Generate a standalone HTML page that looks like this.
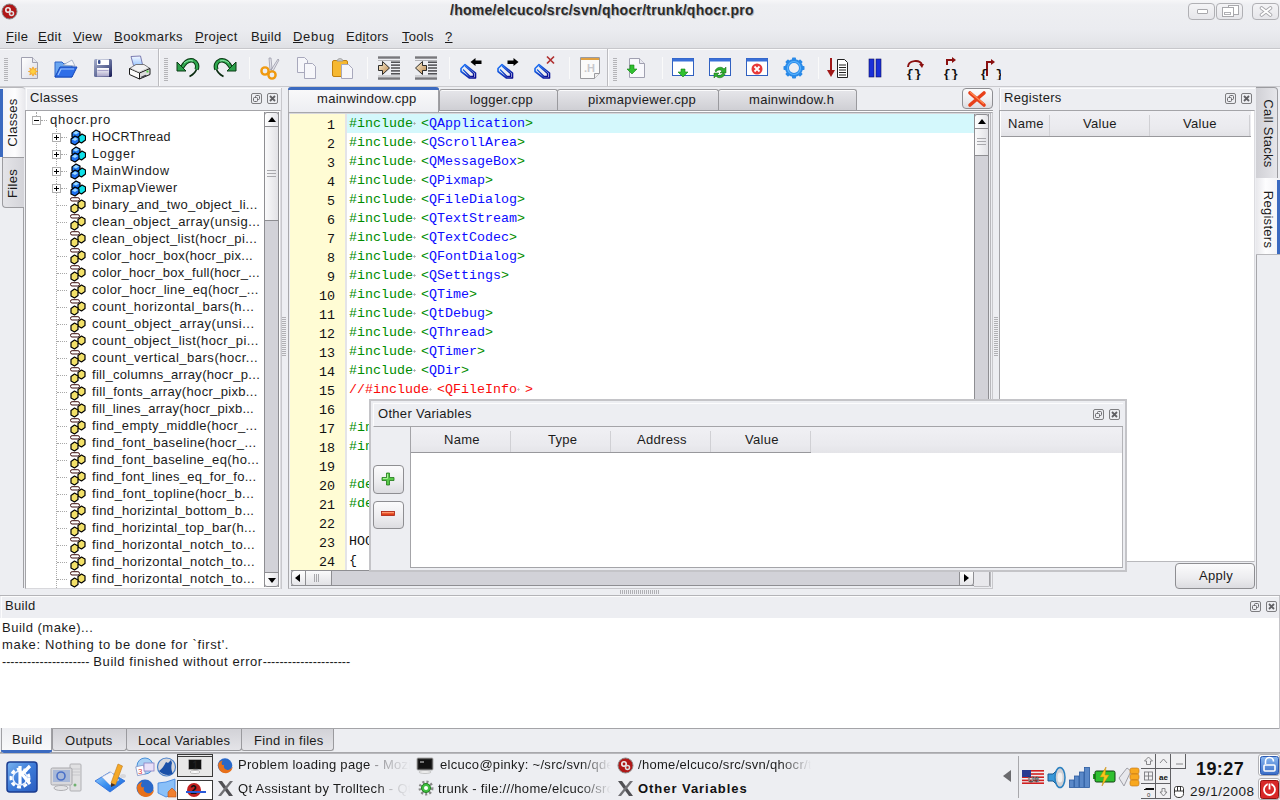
<!DOCTYPE html>
<html><head><meta charset="utf-8">
<style>
*{margin:0;padding:0;box-sizing:border-box}
html,body{width:1280px;height:800px;overflow:hidden}
body{position:relative;background:#edeef2;font-family:"Liberation Sans",sans-serif;color:#1b1b1b}
.a{position:absolute}
.t{position:absolute;font-size:13px;line-height:15px;white-space:nowrap;letter-spacing:0.3px}
.u{text-decoration:underline;text-underline-offset:1px}
.sp{background:radial-gradient(circle at 1.5px 7.5px,#a8a8a8 0.9px,transparent 1.3px)}
.sp.r{background:radial-gradient(circle at 1.5px 7.5px,#b8b8b8 0.9px,transparent 1.3px)}
.mono{font-family:"Liberation Mono",monospace;font-size:13.33px;line-height:19px;white-space:pre}
.btn{position:absolute;border:1px solid #8e8e92;border-radius:3px;background:linear-gradient(#fbfbfc,#ececef 60%,#dcdce0)}
.dk{position:absolute;width:11px;height:11px;border:1px solid #7d7d80;border-radius:2px}
.grip{position:absolute;width:4px;background:repeating-linear-gradient(#b4b4b8 0 1px,transparent 1px 2px)}
.vsep{position:absolute;width:1px;background:#c8c8cc;border-right:1px solid #fafafa}
.tab{position:absolute;border:1px solid #9a9a9e;border-bottom:none;border-radius:3px 3px 0 0;background:linear-gradient(#e6e6ea,#cfcfd4)}
</style></head><body>

<!-- title + menu gradient -->
<div class="a" style="left:0;top:0;width:1280px;height:48px;background:linear-gradient(#f6f6f8 0,#eeeff2 5px,#ebecf0 30px,#e6e7eb 40px,#dfe0e4 48px)"></div>
<div class="a" style="left:0;top:48px;width:1280px;height:1px;background:#c7c7cb"></div>
<div class="a" style="left:0;top:49px;width:1280px;height:1px;background:#fcfcfd"></div>

<!-- app icon -->
<svg class="a" style="left:1px;top:3px" width="17" height="17" viewBox="0 0 17 17">
<circle cx="8.5" cy="8.5" r="7.5" fill="#b01818" stroke="#8a8a8a" stroke-width="1"/>
<circle cx="7" cy="7" r="2.2" fill="none" stroke="#eee" stroke-width="1.6"/>
<circle cx="10.5" cy="10.5" r="2" fill="none" stroke="#ddd" stroke-width="1.5"/>
</svg>
<div class="t" style="left:450px;top:3.3px;font-size:14px;font-weight:bold;letter-spacing:0.27px;color:#2a2a2a;text-shadow:1px 1px 0 #b8b8bc">/home/elcuco/src/svn/qhocr/trunk/qhocr.pro</div>

<!-- window buttons -->
<div class="a" style="left:1188px;top:3px;width:27px;height:17px;border:1.5px solid #b0b0b4;border-radius:4px;background:linear-gradient(#f4f4f6,#e6e6ea)"></div>
<div class="a" style="left:1197px;top:9px;width:11px;height:5px;border:1px solid #a8a8ac;border-radius:1px;background:#fff"></div>
<div class="a" style="left:1216px;top:3px;width:27px;height:17px;border:1.5px solid #b0b0b4;border-radius:4px;background:linear-gradient(#f4f4f6,#e6e6ea)"></div>
<div class="a" style="left:1228px;top:5px;width:11px;height:10px;border:1px solid #a8a8ac;background:#fff"></div>
<div class="a" style="left:1222px;top:7px;width:12px;height:10px;border:1px solid #a8a8ac;background:#fff"></div>
<div class="a" style="left:1252px;top:3px;width:27px;height:17px;border:1.5px solid #b0b0b4;border-radius:4px;background:linear-gradient(#f4f4f6,#e6e6ea)"></div>
<svg class="a" style="left:1259px;top:6px" width="14" height="11" viewBox="0 0 14 11"><path d="M2.5 2l9 7M11.5 2l-9 7" stroke="#a8a8ac" stroke-width="3.6" stroke-linecap="round"/><path d="M2.5 2l9 7M11.5 2l-9 7" stroke="#fff" stroke-width="1.8" stroke-linecap="round"/></svg>
<div class="a" style="left:1224px;top:12px;width:7px;height:3px;border:1px solid #b0b0b4"></div>

<!-- menu -->
<div class="t" style="left:6px;top:29px"><span class="u">F</span>ile</div>
<div class="t" style="left:38px;top:29px"><span class="u">E</span>dit</div>
<div class="t" style="left:73px;top:29px"><span class="u">V</span>iew</div>
<div class="t" style="left:114px;top:29px;letter-spacing:0.45px"><span class="u">B</span>ookmarks</div>
<div class="t" style="left:195px;top:29px"><span class="u">P</span>roject</div>
<div class="t" style="left:251px;top:29px">B<span class="u">u</span>ild</div>
<div class="t" style="left:293px;top:29px;letter-spacing:0.7px"><span class="u">D</span>ebug</div>
<div class="t" style="left:346px;top:29px">Ed<span class="u">i</span>tors</div>
<div class="t" style="left:402px;top:29px"><span class="u">T</span>ools</div>
<div class="t" style="left:445px;top:29px"><span class="u">?</span></div>

<!-- TOOLBAR -->

<div class="grip" style="left:4px;top:58px;height:23px"></div>
<!-- new -->
<svg class="a" style="left:20px;top:56px" width="20" height="24" viewBox="0 0 20 24">
<defs><linearGradient id="pg" x1="0" y1="0" x2="1" y2="1"><stop offset="0" stop-color="#fff"/><stop offset="1" stop-color="#dcdce6"/></linearGradient></defs>
<path d="M1.5 1.5h11l5 5v16h-16z" fill="url(#pg)" stroke="#a0a0b0"/>
<path d="M12.5 1.5v5h5" fill="#e8e8f0" stroke="#a0a0b0"/>
<polygon points="17.6,15.5 15.2,16.4 16.3,18.8 13.9,17.7 13.0,20.1 12.1,17.7 9.7,18.8 10.8,16.4 8.4,15.5 10.8,14.6 9.7,12.2 12.1,13.3 13.0,10.9 13.9,13.3 16.3,12.2 15.2,14.6" fill="#ffd040" stroke="#f09818" stroke-width=".7"/>
</svg>
<!-- open -->
<svg class="a" style="left:54px;top:58px" width="24" height="22" viewBox="0 0 24 22">
<path d="M1 4h7l2 2h8v13H1z" fill="#6aa6f0" stroke="#2a62c8"/>
<path d="M9 7l9-5 3 6z" fill="#f4f6fa" stroke="#8a9ab8" stroke-width=".7"/>
<path d="M1 19l5-10h17l-5 10z" fill="#2e6ee8" stroke="#1848b8"/>
<path d="M4 17l3-6h13" fill="none" stroke="#9cc4ff" stroke-width="1.2"/>
</svg>
<!-- save -->
<svg class="a" style="left:93px;top:58px" width="20" height="20" viewBox="0 0 20 20">
<defs><linearGradient id="fl" x1="0" y1="0" x2="1" y2="1"><stop offset="0" stop-color="#a8b0cc"/><stop offset=".6" stop-color="#5a6494"/><stop offset="1" stop-color="#141650"/></linearGradient>
<linearGradient id="fl2" x1="0" y1="0" x2="0" y2="1"><stop offset="0" stop-color="#fff"/><stop offset="1" stop-color="#a8a4c8"/></linearGradient></defs>
<rect x="1" y="1" width="18" height="18" rx="1.5" fill="url(#fl)"/>
<rect x="4" y="1.5" width="12" height="5.5" fill="#fff"/>
<rect x="5" y="2" width="2.5" height="4" rx="1" fill="#3a5090"/>
<rect x="4" y="10" width="12" height="8.5" fill="url(#fl2)"/>
<rect x="4.5" y="12" width="11" height=".8" fill="#9a94c0"/>
</svg>
<!-- print -->
<svg class="a" style="left:124px;top:52px" width="30" height="30" viewBox="0 0 30 30">
<defs><linearGradient id="pp" x1="0" y1="0" x2="0" y2="1"><stop offset="0" stop-color="#f4f8ff"/><stop offset="1" stop-color="#9cc8ff"/></linearGradient></defs>
<path d="M7 4.5L16.5 4 18.5 12.5 9.5 13.5z" fill="url(#pp)" stroke="#6060a0" stroke-width=".8"/>
<path d="M5.5 16.5L12 12.5h8l6 4-10.5 4.5z" fill="#f2f2f2" stroke="#606060" stroke-width=".8"/>
<path d="M5.5 16.5l10 4.5v6l-10-4.5z" fill="#fbfbfb" stroke="#1a1a1a" stroke-width="1"/>
<path d="M15.5 21l10.5-4.5v6L15.5 27z" fill="#dcdcdc" stroke="#1a1a1a" stroke-width="1"/>
<path d="M16.5 25l5-2.2 1.5 1-5 2.3z" fill="#404048"/>
<rect x="22.5" y="18.5" width="2" height="2" fill="#50d040"/>
<path d="M8 17l7 3 9-3.8" fill="none" stroke="#c8c8c8" stroke-width=".8"/>
</svg>
<div class="a" style="left:158px;top:49px;width:1px;height:37px;background:#bcbcc0"></div><div class="a" style="left:159px;top:49px;width:1px;height:37px;background:#fcfcfd"></div>
<div class="grip" style="left:164px;top:58px;height:23px"></div>
<!-- undo -->
<svg class="a" style="left:176px;top:57px" width="24" height="22" viewBox="0 0 24 22">
<path d="M20.5 12C20 15 17 17.5 13.5 19.5" fill="none" stroke="#0a2a10" stroke-width="1.6"/>
<path d="M6 10.5C9 5 13 2.5 17 3.5 21 5 22 9 20.5 12.5" fill="none" stroke="#0a3a14" stroke-width="4.4"/>
<path d="M6 10.5C9 5 13 2.5 17 3.5 21 5 22 9 20.5 12.5" fill="none" stroke="#30a850" stroke-width="2.4"/>
<path d="M1 5v9h9z" fill="#2aa04a" stroke="#0a3a14" stroke-width="1" stroke-linejoin="round"/>
<path d="M8 6C11 3.5 14 3 17 4" fill="none" stroke="#a0f0b8" stroke-width=".9"/>
</svg>
<!-- redo -->
<svg class="a" style="left:213px;top:57px" width="24" height="22" viewBox="0 0 24 22">
<g transform="translate(24 0) scale(-1 1)">
<path d="M20.5 12C20 15 17 17.5 13.5 19.5" fill="none" stroke="#0a2a10" stroke-width="1.6"/>
<path d="M6 10.5C9 5 13 2.5 17 3.5 21 5 22 9 20.5 12.5" fill="none" stroke="#0a3a14" stroke-width="4.4"/>
<path d="M6 10.5C9 5 13 2.5 17 3.5 21 5 22 9 20.5 12.5" fill="none" stroke="#30a850" stroke-width="2.4"/>
<path d="M1 5v9h9z" fill="#2aa04a" stroke="#0a3a14" stroke-width="1" stroke-linejoin="round"/>
<path d="M8 6C11 3.5 14 3 17 4" fill="none" stroke="#a0f0b8" stroke-width=".9"/>
</g>
</svg>
<div class="vsep" style="left:249px;top:57px;height:22px"></div>
<!-- cut -->
<svg class="a" style="left:259px;top:56px" width="22" height="24" viewBox="0 0 22 24">
<path d="M11 14L10 2l2 0 1 11zM12 14l7-11 1 1-6 11z" fill="#e4e4ec" stroke="#9090a0" stroke-width=".7"/>
<circle cx="6" cy="15" r="3.6" fill="none" stroke="#f09a10" stroke-width="2.4"/>
<circle cx="13" cy="19" r="3.6" fill="none" stroke="#f09a10" stroke-width="2.4"/>
</svg>
<!-- copy -->
<svg class="a" style="left:296px;top:56px" width="22" height="24" viewBox="0 0 22 24">
<path d="M1.5 1.5h7l3 3v12h-10z" fill="#f6f6fa" stroke="#a8a8bc"/>
<path d="M8.5 7.5h8l3 3v12h-11z" fill="#f6f6fa" stroke="#a8a8bc"/>
</svg>
<!-- paste -->
<svg class="a" style="left:331px;top:56px" width="24" height="24" viewBox="0 0 24 24">
<rect x="1.5" y="4.5" width="15" height="16" rx="1.5" fill="#f6b830" stroke="#c08010"/>
<path d="M6 5c0-3 6-3 6 0z" fill="#ddd" stroke="#999"/>
<path d="M10.5 8.5h7l4 4v10h-11z" fill="#f6f6fa" stroke="#a8a8bc"/>
</svg>
<div class="vsep" style="left:367px;top:57px;height:22px"></div>
<!-- indent -->
<svg class="a" style="left:376px;top:56px" width="26" height="24" viewBox="0 0 26 24"><defs><linearGradient id="ib" x1="0" y1="0" x2="0" y2="1"><stop offset="0" stop-color="#b0b0b4"/><stop offset=".5" stop-color="#78787c"/><stop offset="1" stop-color="#a8a8ac"/></linearGradient>
<linearGradient id="ia" x1="0" y1="0" x2="1" y2="1"><stop offset="0" stop-color="#fff4d8"/><stop offset="1" stop-color="#b8844a"/></linearGradient></defs>
<rect x="2" y="0" width="22" height="3" fill="url(#ib)"/><rect x="2" y="4" width="22" height="1" fill="#b4b4b8"/>
<rect x="2" y="21" width="22" height="3" fill="url(#ib)"/><rect x="2" y="19.5" width="22" height="1" fill="#b4b4b8"/>
<g fill="#404044"><rect x="15" y="5.5" width="9" height="1.4"/><rect x="15" y="8.4" width="9" height="1.4"/><rect x="15" y="11.3" width="9" height="1.4"/><rect x="15" y="14.2" width="9" height="1.4"/><rect x="15" y="17.1" width="9" height="1.4"/></g>
<path d="M2.5 9.5h4v-4l7 6.5-7 6.5v-4h-4z" fill="url(#ia)" stroke="#1a1a1a" stroke-width=".9" stroke-linejoin="round"/>
</svg>
<!-- unindent -->
<svg class="a" style="left:413px;top:56px" width="26" height="24" viewBox="0 0 26 24"><defs><linearGradient id="ib2" x1="0" y1="0" x2="0" y2="1"><stop offset="0" stop-color="#b0b0b4"/><stop offset=".5" stop-color="#78787c"/><stop offset="1" stop-color="#a8a8ac"/></linearGradient>
<linearGradient id="ia2" x1="0" y1="0" x2="1" y2="1"><stop offset="0" stop-color="#fff4d8"/><stop offset="1" stop-color="#b8844a"/></linearGradient></defs>
<rect x="2" y="0" width="22" height="3" fill="url(#ib2)"/><rect x="2" y="4" width="22" height="1" fill="#b4b4b8"/>
<rect x="2" y="21" width="22" height="3" fill="url(#ib2)"/><rect x="2" y="19.5" width="22" height="1" fill="#b4b4b8"/>
<g fill="#404044"><rect x="15" y="5.5" width="9" height="1.4"/><rect x="15" y="8.4" width="9" height="1.4"/><rect x="15" y="11.3" width="9" height="1.4"/><rect x="15" y="14.2" width="9" height="1.4"/><rect x="15" y="17.1" width="9" height="1.4"/></g>
<path d="M13.5 9.5h-4v-4l-7 6.5 7 6.5v-4h4z" fill="url(#ia2)" stroke="#1a1a1a" stroke-width=".9" stroke-linejoin="round"/>
</svg>
<div class="vsep" style="left:449px;top:57px;height:22px"></div>
<!-- bookmarks -->
<svg class="a" style="left:456px;top:54px" width="28" height="28" viewBox="0 0 28 28"><defs><linearGradient id="pc1" x1="0" y1="0" x2="1" y2="1"><stop offset="0" stop-color="#1a78ff"/><stop offset="1" stop-color="#0a0a90"/></linearGradient></defs>
<path d="M5 14.5l4-4 10.5 8.5v5h-6L5 17.5z" fill="none" stroke="url(#pc1)" stroke-width="1.6" stroke-linejoin="round"/>
<path d="M9 12l8.5 7.5v3h-3.5L7 15.5" fill="none" stroke="url(#pc1)" stroke-width="1.3" stroke-linejoin="round"/>
<path d="M14.5 8l5-4v2.5h6v3.5h-6V12z" fill="#000"/>
</svg>
<svg class="a" style="left:493px;top:54px" width="28" height="28" viewBox="0 0 28 28"><defs><linearGradient id="pc2" x1="0" y1="0" x2="1" y2="1"><stop offset="0" stop-color="#1a78ff"/><stop offset="1" stop-color="#0a0a90"/></linearGradient></defs>
<path d="M5 14.5l4-4 10.5 8.5v5h-6L5 17.5z" fill="none" stroke="url(#pc2)" stroke-width="1.6" stroke-linejoin="round"/>
<path d="M9 12l8.5 7.5v3h-3.5L7 15.5" fill="none" stroke="url(#pc2)" stroke-width="1.3" stroke-linejoin="round"/>
<path d="M25.5 8l-5-4v2.5h-6v3.5h6V12z" fill="#000"/>
</svg>
<svg class="a" style="left:530px;top:54px" width="28" height="28" viewBox="0 0 28 28"><defs><linearGradient id="pc3" x1="0" y1="0" x2="1" y2="1"><stop offset="0" stop-color="#1a78ff"/><stop offset="1" stop-color="#0a0a90"/></linearGradient></defs>
<path d="M5 14.5l4-4 10.5 8.5v5h-6L5 17.5z" fill="none" stroke="url(#pc3)" stroke-width="1.6" stroke-linejoin="round"/>
<path d="M9 12l8.5 7.5v3h-3.5L7 15.5" fill="none" stroke="url(#pc3)" stroke-width="1.3" stroke-linejoin="round"/>
<path d="M17 2.5l7 7M24 2.5l-7 7" stroke="#b03030" stroke-width="1.7"/>
</svg>
<div class="vsep" style="left:569px;top:57px;height:22px"></div>
<!-- .H -->
<svg class="a" style="left:579px;top:56px" width="22" height="24" viewBox="0 0 22 24">
<path d="M1.5 1.5h19v16l-5 5h-14z" fill="#fafafa" stroke="#9a9a9e"/>
<rect x="2" y="2" width="18" height="2" fill="#e0a040"/>
<path d="M15.5 22.5v-5h5" fill="#eee" stroke="#9a9a9e"/>
<text x="5" y="16" font-family="Liberation Sans" font-size="11" font-weight="bold" fill="#c8c8cc">.H</text>
</svg>
<div class="a" style="left:607px;top:49px;width:1px;height:37px;background:#bcbcc0"></div><div class="a" style="left:608px;top:49px;width:1px;height:37px;background:#fcfcfd"></div>
<div class="grip" style="left:613px;top:58px;height:23px"></div>
<!-- newfrom -->
<svg class="a" style="left:625px;top:56px" width="24" height="24" viewBox="0 0 24 24">
<path d="M4.5 2.5h10l5 5v14h-15z" fill="#f8f8fc" stroke="#a0a0b0"/>
<path d="M14.5 2.5v5h5" fill="#e8e8f0" stroke="#a0a0b0"/>
<path d="M5 9h4v4h3l-5 5-5-5h3z" fill="#30c030" stroke="#108010" stroke-width=".6"/>
</svg>
<div class="vsep" style="left:662px;top:57px;height:22px"></div>
<!-- windows -->
<svg class="a" style="left:671px;top:56px" width="24" height="24" viewBox="0 0 24 24">
<rect x="1.5" y="2.5" width="21" height="17" fill="#fff" stroke="#3060c0"/><rect x="1.5" y="2.5" width="21" height="3" fill="#3a70d8"/>
<path d="M10 13h4v3h3l-5 5-5-5h3z" fill="#30c030" stroke="#108010" stroke-width=".6"/>
</svg>
<svg class="a" style="left:708px;top:56px" width="24" height="24" viewBox="0 0 24 24">
<rect x="1.5" y="2.5" width="21" height="17" fill="#fff" stroke="#3060c0"/><rect x="1.5" y="2.5" width="21" height="3" fill="#3a70d8"/>
<path d="M7 15c1-4 7-5 9-2l2-2v6h-6l2-2c-2-2-5-1-6 1zM17 18c-1 4-7 5-9 2l-2 2v-5h5l-2 2c2 1 5 0 6-2z" fill="#30b030" stroke="#106010" stroke-width=".5"/>
</svg>
<svg class="a" style="left:745px;top:56px" width="24" height="24" viewBox="0 0 24 24">
<rect x="1.5" y="2.5" width="21" height="17" fill="#fff" stroke="#3060c0"/><rect x="1.5" y="2.5" width="21" height="3" fill="#3a70d8"/>
<circle cx="12" cy="13" r="5.5" fill="#e83838"/>
<path d="M9.5 10.5l5 5M14.5 10.5l-5 5" stroke="#fff" stroke-width="1.8"/>
</svg>
<!-- gear -->
<svg class="a" style="left:782px;top:56px" width="24" height="24" viewBox="0 0 24 24"><rect x="10" y="1.5" width="4" height="5" rx=".8" fill="#2a8ae8" transform="rotate(0 12 12)"/><rect x="10" y="1.5" width="4" height="5" rx=".8" fill="#2a8ae8" transform="rotate(45 12 12)"/><rect x="10" y="1.5" width="4" height="5" rx=".8" fill="#2a8ae8" transform="rotate(90 12 12)"/><rect x="10" y="1.5" width="4" height="5" rx=".8" fill="#2a8ae8" transform="rotate(135 12 12)"/><rect x="10" y="1.5" width="4" height="5" rx=".8" fill="#2a8ae8" transform="rotate(180 12 12)"/><rect x="10" y="1.5" width="4" height="5" rx=".8" fill="#2a8ae8" transform="rotate(225 12 12)"/><rect x="10" y="1.5" width="4" height="5" rx=".8" fill="#2a8ae8" transform="rotate(270 12 12)"/><rect x="10" y="1.5" width="4" height="5" rx=".8" fill="#2a8ae8" transform="rotate(315 12 12)"/><circle cx="12" cy="12" r="7" fill="none" stroke="#2a8ae8" stroke-width="4"/><circle cx="12" cy="12" r="6.5" fill="none" stroke="#5ab4ff" stroke-width="1.2"/></svg>
<div class="vsep" style="left:818px;top:57px;height:22px"></div>
<!-- debug -->
<svg class="a" style="left:827px;top:56px" width="24" height="24" viewBox="0 0 24 24">
<rect x="3" y="2" width="2" height="15" fill="#a01818"/><path d="M0 14h8l-4 7z" fill="#a01818"/>
<path d="M10.5 3.5h7l3 3v15h-10z" fill="#fff" stroke="#222"/>
<g stroke="#222"><path d="M12 9h7M12 11.5h7M12 14h7M12 16.5h7M12 19h7"/></g>
</svg>
<svg class="a" style="left:867px;top:57px" width="16" height="22" viewBox="0 0 16 22">
<rect x="2" y="2" width="5" height="18" fill="#1a30d8" stroke="#101060" stroke-width=".6"/>
<rect x="9" y="2" width="5" height="18" fill="#1a30d8" stroke="#101060" stroke-width=".6"/>
</svg>
<svg class="a" style="left:903px;top:56px" width="24" height="24" viewBox="0 0 24 24">
<path d="M5 11c0-7 12-8 14-2" fill="none" stroke="#8a1010" stroke-width="2"/><path d="M16 8h5l-2 4z" fill="#8a1010"/>
<text x="3" y="22" font-family="Liberation Mono" font-size="13" font-weight="bold" fill="#111">{}</text>
</svg>
<svg class="a" style="left:940px;top:56px" width="24" height="24" viewBox="0 0 24 24">
<path d="M7 9V4h6" fill="none" stroke="#8a1010" stroke-width="2"/><path d="M12 1l4 3-4 3z" fill="#8a1010"/>
<text x="3" y="22" font-family="Liberation Mono" font-size="13" font-weight="bold" fill="#111">{}</text>
</svg>
<svg class="a" style="left:977px;top:56px" width="24" height="24" viewBox="0 0 24 24">
<path d="M10 20V6h5" fill="none" stroke="#8a1010" stroke-width="2"/><path d="M14 3l4 3-4 3z" fill="#8a1010"/>
<text x="3" y="22" font-family="Liberation Mono" font-size="13" font-weight="bold" fill="#111">{ }</text>
</svg>

<div class="a" style="left:0;top:86px;width:1280px;height:1px;background:#c9c9cd"></div>

<!-- LEFT TAB STRIP -->

<div class="a" style="left:23px;top:157px;width:1px;height:431px;background:#a0a0a4"></div>
<div class="a" style="left:0;top:87px;width:25px;height:71px;background:linear-gradient(90deg,#f2f2f5,#fdfdfe 60%,#e8e8ec);border-top:1px solid #b8b8bc;border-top-right-radius:3px"></div>
<div class="a" style="left:0;top:89px;width:3px;height:68px;background:#3b6ac0"></div>
<div class="t" style="left:-28px;top:115px;width:80px;height:15px;font-size:13px;text-align:center;transform:rotate(-90deg)">Classes</div>
<div class="a" style="left:2px;top:157px;width:22px;height:51px;background:linear-gradient(90deg,#e4e4e8,#d4d4d9);border:1px solid #9c9ca0;border-right:none;border-bottom-left-radius:4px"></div>
<div class="t" style="left:-28px;top:176px;width:80px;height:15px;font-size:13px;text-align:center;transform:rotate(-90deg)">Files</div>


<!-- CLASSES DOCK -->

<svg width="0" height="0" style="position:absolute">
<defs>
<symbol id="clsi" viewBox="0 0 16 17">
<g stroke="#000" stroke-width="1.2" stroke-linejoin="round">
<path d="M2 4l4-3 4 2v4l-4 3-4-2z" fill="#1e78f0"/>
<path d="M8 8l4-3 3.5 2v4l-4 3-3.5-2z" fill="#10e0e8"/>
<path d="M1 10l4-3 4 2v4l-4 3-4-2z" fill="#1e70f0"/>
</g>
<path d="M3 4l3-2 3 1.5-3 2z M2 10.5l3-2 3 1.5-3 2z" fill="#9ad8ff"/>
</symbol>
<symbol id="fni" viewBox="0 0 16 17">
<rect x="0.5" y="0.7" width="9" height="3.3" rx="1.6" fill="none" stroke="#3a0a0a" stroke-width="1"/>
<g stroke="#000" stroke-width="1.2" stroke-linejoin="round" fill="#f2e068">
<path d="M8 5.5l3.5-2.5 3.5 2v4.5l-3.5 2.5-3.5-2z"/>
<path d="M1 9.5l3.5-2.5 3.5 2v4.5l-3.5 2.5-3.5-2z"/>
</g>
</symbol>
</defs></svg>
<div class="a" style="left:26px;top:88px;width:255px;height:23px;border-top:1px solid #fcfcfd;border-left:1px solid #fcfcfd"></div>
<div class="t" style="left:30px;top:90px">Classes</div>
<div class="dk" style="left:251px;top:93px"></div><svg class="a" style="left:251px;top:93px" width="11" height="11"><rect x="4.5" y="2.5" width="4" height="4" rx="1" fill="none" stroke="#6a6a6e"/><rect x="2.5" y="4.5" width="4" height="4" rx="1" fill="#edeef2" stroke="#6a6a6e"/></svg>
<div class="dk" style="left:267px;top:93px"></div><svg class="a" style="left:267px;top:93px" width="11" height="11"><path d="M3 3l5 5M8 3l-5 5" stroke="#606064" stroke-width="1.8"/></svg>
<div class="a" style="left:25px;top:110px;width:256px;height:479px;background:#fff;border:1px solid #a4a4a8;border-right-color:#dcdce0;border-bottom-color:#d8d8dc"></div>
<!-- tree lines -->
<div class="a" style="left:36px;top:112px;width:1px;height:4px;border-left:1px dotted #a8a8a8"></div>
<div class="a" style="left:41px;top:120px;width:6px;height:1px;border-top:1px dotted #a8a8a8"></div>
<div class="a" style="left:56px;top:125px;width:1px;height:463px;border-left:1px dotted #a8a8a8"></div>
<div class="a" style="left:32px;top:116px;width:9px;height:9px;border:1px solid #b0b0b0;background:#fff"></div>
<div class="a" style="left:34px;top:120px;width:5px;height:1px;background:#000"></div>
<div class="t" style="left:50px;top:112px;letter-spacing:0.75px">qhocr.pro</div>
<div class="a" style="left:61px;top:137px;width:6px;height:1px;border-top:1px dotted #a8a8a8"></div><div class="a" style="left:52px;top:133px;width:9px;height:9px;border:1px solid #b0b0b0;background:#fff"></div><div class="a" style="left:54px;top:137px;width:5px;height:1px;background:#000"></div><div class="a" style="left:56px;top:135px;width:1px;height:5px;background:#000"></div><svg class="a" style="left:70px;top:129px" width="16" height="17"><use href="#clsi"/></svg><div class="t" style="left:92px;top:130px;font-size:12.5px;letter-spacing:0.25px">HOCRThread</div>
<div class="a" style="left:61px;top:154px;width:6px;height:1px;border-top:1px dotted #a8a8a8"></div><div class="a" style="left:52px;top:150px;width:9px;height:9px;border:1px solid #b0b0b0;background:#fff"></div><div class="a" style="left:54px;top:154px;width:5px;height:1px;background:#000"></div><div class="a" style="left:56px;top:152px;width:1px;height:5px;background:#000"></div><svg class="a" style="left:70px;top:146px" width="16" height="17"><use href="#clsi"/></svg><div class="t" style="left:92px;top:147px;font-size:12.5px;letter-spacing:0.8px">Logger</div>
<div class="a" style="left:61px;top:171px;width:6px;height:1px;border-top:1px dotted #a8a8a8"></div><div class="a" style="left:52px;top:167px;width:9px;height:9px;border:1px solid #b0b0b0;background:#fff"></div><div class="a" style="left:54px;top:171px;width:5px;height:1px;background:#000"></div><div class="a" style="left:56px;top:169px;width:1px;height:5px;background:#000"></div><svg class="a" style="left:70px;top:163px" width="16" height="17"><use href="#clsi"/></svg><div class="t" style="left:92px;top:164px;font-size:12.5px;letter-spacing:0.6px">MainWindow</div>
<div class="a" style="left:61px;top:188px;width:6px;height:1px;border-top:1px dotted #a8a8a8"></div><div class="a" style="left:52px;top:184px;width:9px;height:9px;border:1px solid #b0b0b0;background:#fff"></div><div class="a" style="left:54px;top:188px;width:5px;height:1px;background:#000"></div><div class="a" style="left:56px;top:186px;width:1px;height:5px;background:#000"></div><svg class="a" style="left:70px;top:180px" width="16" height="17"><use href="#clsi"/></svg><div class="t" style="left:92px;top:181px;font-size:12.5px;letter-spacing:0.5px">PixmapViewer</div>
<div class="a" style="left:57px;top:205px;width:10px;height:1px;border-top:1px dotted #a8a8a8"></div><svg class="a" style="left:70px;top:197px" width="16" height="17"><use href="#fni"/></svg><div class="t" style="left:92px;top:197px;letter-spacing:0.296px">binary_and_two_object_li...</div>
<div class="a" style="left:57px;top:222px;width:10px;height:1px;border-top:1px dotted #a8a8a8"></div><svg class="a" style="left:70px;top:214px" width="16" height="17"><use href="#fni"/></svg><div class="t" style="left:92px;top:214px;letter-spacing:0.454px">clean_object_array(unsig...</div>
<div class="a" style="left:57px;top:239px;width:10px;height:1px;border-top:1px dotted #a8a8a8"></div><svg class="a" style="left:70px;top:231px" width="16" height="17"><use href="#fni"/></svg><div class="t" style="left:92px;top:231px;letter-spacing:0.407px">clean_object_list(hocr_pi...</div>
<div class="a" style="left:57px;top:256px;width:10px;height:1px;border-top:1px dotted #a8a8a8"></div><svg class="a" style="left:70px;top:248px" width="16" height="17"><use href="#fni"/></svg><div class="t" style="left:92px;top:248px;letter-spacing:0.3px">color_hocr_box(hocr_pix...</div>
<div class="a" style="left:57px;top:273px;width:10px;height:1px;border-top:1px dotted #a8a8a8"></div><svg class="a" style="left:70px;top:265px" width="16" height="17"><use href="#fni"/></svg><div class="t" style="left:92px;top:265px;letter-spacing:0.263px">color_hocr_box_full(hocr_...</div>
<div class="a" style="left:57px;top:290px;width:10px;height:1px;border-top:1px dotted #a8a8a8"></div><svg class="a" style="left:70px;top:282px" width="16" height="17"><use href="#fni"/></svg><div class="t" style="left:92px;top:282px;letter-spacing:0.338px">color_hocr_line_eq(hocr_...</div>
<div class="a" style="left:57px;top:307px;width:10px;height:1px;border-top:1px dotted #a8a8a8"></div><svg class="a" style="left:70px;top:299px" width="16" height="17"><use href="#fni"/></svg><div class="t" style="left:92px;top:299px;letter-spacing:0.46px">count_horizontal_bars(h...</div>
<div class="a" style="left:57px;top:324px;width:10px;height:1px;border-top:1px dotted #a8a8a8"></div><svg class="a" style="left:70px;top:316px" width="16" height="17"><use href="#fni"/></svg><div class="t" style="left:92px;top:316px;letter-spacing:0.5px">count_object_array(unsi...</div>
<div class="a" style="left:57px;top:341px;width:10px;height:1px;border-top:1px dotted #a8a8a8"></div><svg class="a" style="left:70px;top:333px" width="16" height="17"><use href="#fni"/></svg><div class="t" style="left:92px;top:333px;letter-spacing:0.437px">count_object_list(hocr_pi...</div>
<div class="a" style="left:57px;top:358px;width:10px;height:1px;border-top:1px dotted #a8a8a8"></div><svg class="a" style="left:70px;top:350px" width="16" height="17"><use href="#fni"/></svg><div class="t" style="left:92px;top:350px;letter-spacing:0.508px">count_vertical_bars(hocr...</div>
<div class="a" style="left:57px;top:375px;width:10px;height:1px;border-top:1px dotted #a8a8a8"></div><svg class="a" style="left:70px;top:367px" width="16" height="17"><use href="#fni"/></svg><div class="t" style="left:92px;top:367px;letter-spacing:0.3px">fill_columns_array(hocr_p...</div>
<div class="a" style="left:57px;top:392px;width:10px;height:1px;border-top:1px dotted #a8a8a8"></div><svg class="a" style="left:70px;top:384px" width="16" height="17"><use href="#fni"/></svg><div class="t" style="left:92px;top:384px;letter-spacing:0.332px">fill_fonts_array(hocr_pixb...</div>
<div class="a" style="left:57px;top:409px;width:10px;height:1px;border-top:1px dotted #a8a8a8"></div><svg class="a" style="left:70px;top:401px" width="16" height="17"><use href="#fni"/></svg><div class="t" style="left:92px;top:401px;letter-spacing:0.254px">fill_lines_array(hocr_pixb...</div>
<div class="a" style="left:57px;top:426px;width:10px;height:1px;border-top:1px dotted #a8a8a8"></div><svg class="a" style="left:70px;top:418px" width="16" height="17"><use href="#fni"/></svg><div class="t" style="left:92px;top:418px;letter-spacing:0.332px">find_empty_middle(hocr_...</div>
<div class="a" style="left:57px;top:443px;width:10px;height:1px;border-top:1px dotted #a8a8a8"></div><svg class="a" style="left:70px;top:435px" width="16" height="17"><use href="#fni"/></svg><div class="t" style="left:92px;top:435px;letter-spacing:0.419px">find_font_baseline(hocr_...</div>
<div class="a" style="left:57px;top:460px;width:10px;height:1px;border-top:1px dotted #a8a8a8"></div><svg class="a" style="left:70px;top:452px" width="16" height="17"><use href="#fni"/></svg><div class="t" style="left:92px;top:452px;letter-spacing:0.385px">find_font_baseline_eq(ho...</div>
<div class="a" style="left:57px;top:477px;width:10px;height:1px;border-top:1px dotted #a8a8a8"></div><svg class="a" style="left:70px;top:469px" width="16" height="17"><use href="#fni"/></svg><div class="t" style="left:92px;top:469px;letter-spacing:0.267px">find_font_lines_eq_for_fo...</div>
<div class="a" style="left:57px;top:494px;width:10px;height:1px;border-top:1px dotted #a8a8a8"></div><svg class="a" style="left:70px;top:486px" width="16" height="17"><use href="#fni"/></svg><div class="t" style="left:92px;top:486px;letter-spacing:0.442px">find_font_topline(hocr_b...</div>
<div class="a" style="left:57px;top:511px;width:10px;height:1px;border-top:1px dotted #a8a8a8"></div><svg class="a" style="left:70px;top:503px" width="16" height="17"><use href="#fni"/></svg><div class="t" style="left:92px;top:503px;letter-spacing:0.365px">find_horizintal_bottom_b...</div>
<div class="a" style="left:57px;top:528px;width:10px;height:1px;border-top:1px dotted #a8a8a8"></div><svg class="a" style="left:70px;top:520px" width="16" height="17"><use href="#fni"/></svg><div class="t" style="left:92px;top:520px;letter-spacing:0.359px">find_horizintal_top_bar(h...</div>
<div class="a" style="left:57px;top:545px;width:10px;height:1px;border-top:1px dotted #a8a8a8"></div><svg class="a" style="left:70px;top:537px" width="16" height="17"><use href="#fni"/></svg><div class="t" style="left:92px;top:537px;letter-spacing:0.392px">find_horizontal_notch_to...</div>
<div class="a" style="left:57px;top:562px;width:10px;height:1px;border-top:1px dotted #a8a8a8"></div><svg class="a" style="left:70px;top:554px" width="16" height="17"><use href="#fni"/></svg><div class="t" style="left:92px;top:554px;letter-spacing:0.392px">find_horizontal_notch_to...</div>
<div class="a" style="left:57px;top:579px;width:10px;height:1px;border-top:1px dotted #a8a8a8"></div><svg class="a" style="left:70px;top:571px" width="16" height="17"><use href="#fni"/></svg><div class="t" style="left:92px;top:571px;letter-spacing:0.392px">find_horizontal_notch_to...</div>

<!-- tree scrollbar -->
<div class="a" style="left:264px;top:112px;width:15px;height:475px;background:#d2d2d8;border-left:1px solid #8e8e92;border-right:1px solid #8e8e92"></div>
<div class="a" style="left:264px;top:112px;width:15px;height:15px;background:linear-gradient(90deg,#fff,#e6e6ea);border:1px solid #8e8e92;border-radius:3px 3px 0 0"></div>
<div class="a" style="left:268px;top:117px;width:0;height:0;border-left:4px solid transparent;border-right:4px solid transparent;border-bottom:5px solid #000"></div>
<div class="a" style="left:264px;top:126px;width:15px;height:95px;background:linear-gradient(90deg,#fafafb,#e2e2e6);border:1px solid #8e8e92"></div>
<div class="a" style="left:267px;top:170px;width:9px;height:7px;background:repeating-linear-gradient(#a8a8ac 0 1px,transparent 1px 3px)"></div>
<div class="a" style="left:264px;top:572px;width:15px;height:15px;background:linear-gradient(90deg,#fff,#e6e6ea);border:1px solid #8e8e92;border-radius:0 0 3px 3px"></div>
<div class="a" style="left:268px;top:578px;width:0;height:0;border-left:4px solid transparent;border-right:4px solid transparent;border-top:5px solid #000"></div>
<div class="a" style="left:281px;top:88px;width:1px;height:501px;background:#c8c8cc"></div>
<!-- splitter grip -->
<div class="a" style="left:282px;top:317px;width:4px;height:39px;background:repeating-linear-gradient(#b0b0b4 0 1px,transparent 1px 2px)"></div>


<!-- EDITOR -->

<!-- editor tabs -->
<div class="a" style="left:288px;top:110px;width:705px;height:1px;background:#9c9ca0"></div><div class="a" style="left:288px;top:111px;width:705px;height:1px;background:#fcfcfd"></div>
<div class="tab" style="left:439px;top:89px;width:119px;height:21px;box-shadow:inset 0 1px 0 #fbfbfc"></div>
<div class="tab" style="left:557px;top:89px;width:162px;height:21px;box-shadow:inset 0 1px 0 #fbfbfc"></div>
<div class="tab" style="left:718px;top:89px;width:139px;height:21px;box-shadow:inset 0 1px 0 #fbfbfc"></div>
<div class="a" style="left:288px;top:87px;width:151px;height:25px;background:linear-gradient(#fafafb,#edeef2);border-left:1px solid #b0b0b4;border-right:1px solid #a0a0a4;border-radius:3px 3px 0 0"></div>
<div class="a" style="left:288px;top:87px;width:151px;height:3px;background:#3b6ac0;border-radius:3px 3px 0 0"></div>
<div class="t" style="left:317px;top:91px">mainwindow.cpp</div>
<div class="t" style="left:470px;top:92px">logger.cpp</div>
<div class="t" style="left:588px;top:92px">pixmapviewer.cpp</div>
<div class="t" style="left:749px;top:92px">mainwindow.h</div>
<div class="btn" style="left:962px;top:88px;width:31px;height:21px;border-radius:4px"></div>
<svg class="a" style="left:967px;top:90px" width="20" height="18" viewBox="0 0 20 18">
<path d="M3 3l14 12M17 3L3 15" stroke="#e8401a" stroke-width="3.6" stroke-linecap="round"/>
<path d="M3.5 2.5l13 11" stroke="#ff8a50" stroke-width="1.2" stroke-linecap="round"/>
</svg>
<!-- editor frame -->
<div class="a" style="left:288px;top:112px;width:705px;height:477px;border:1px solid #a8a8ac;border-right-color:#c8c8cc;border-bottom-color:#c8c8cc;background:#edeef2"></div>
<div class="a" style="left:289px;top:113px;width:702px;height:1px;background:#d8d8dc"></div><div class="a" style="left:290px;top:114px;width:55px;height:456px;background:#fffcd4"></div>
<div class="a" style="left:345px;top:114px;width:2px;height:456px;background:#e4e4e8"></div>
<div class="a" style="left:347px;top:114px;width:627px;height:456px;background:#fff"></div><div class="a" style="left:990px;top:113px;width:1px;height:474px;background:#b8b8bc"></div>
<div class="a" style="left:347px;top:114px;width:627px;height:19px;background:#d4f8fc"></div>
<div class="mono a" style="left:290px;top:115.5px;width:45px;text-align:right;color:#111">1</div><div class="mono a" style="left:290px;top:134.5px;width:45px;text-align:right;color:#111">2</div><div class="mono a" style="left:290px;top:153.5px;width:45px;text-align:right;color:#111">3</div><div class="mono a" style="left:290px;top:172.5px;width:45px;text-align:right;color:#111">4</div><div class="mono a" style="left:290px;top:191.5px;width:45px;text-align:right;color:#111">5</div><div class="mono a" style="left:290px;top:210.5px;width:45px;text-align:right;color:#111">6</div><div class="mono a" style="left:290px;top:229.5px;width:45px;text-align:right;color:#111">7</div><div class="mono a" style="left:290px;top:248.5px;width:45px;text-align:right;color:#111">8</div><div class="mono a" style="left:290px;top:267.5px;width:45px;text-align:right;color:#111">9</div><div class="mono a" style="left:290px;top:286.5px;width:45px;text-align:right;color:#111">10</div><div class="mono a" style="left:290px;top:305.5px;width:45px;text-align:right;color:#111">11</div><div class="mono a" style="left:290px;top:324.5px;width:45px;text-align:right;color:#111">12</div><div class="mono a" style="left:290px;top:343.5px;width:45px;text-align:right;color:#111">13</div><div class="mono a" style="left:290px;top:362.5px;width:45px;text-align:right;color:#111">14</div><div class="mono a" style="left:290px;top:381.5px;width:45px;text-align:right;color:#111">15</div><div class="mono a" style="left:290px;top:400.5px;width:45px;text-align:right;color:#111">16</div><div class="mono a" style="left:290px;top:419.5px;width:45px;text-align:right;color:#111">17</div><div class="mono a" style="left:290px;top:438.5px;width:45px;text-align:right;color:#111">18</div><div class="mono a" style="left:290px;top:457.5px;width:45px;text-align:right;color:#111">19</div><div class="mono a" style="left:290px;top:476.5px;width:45px;text-align:right;color:#111">20</div><div class="mono a" style="left:290px;top:495.5px;width:45px;text-align:right;color:#111">21</div><div class="mono a" style="left:290px;top:514.5px;width:45px;text-align:right;color:#111">22</div><div class="mono a" style="left:290px;top:533.5px;width:45px;text-align:right;color:#111">23</div><div class="mono a" style="left:290px;top:552.5px;width:45px;text-align:right;color:#111">24</div><div class="mono a" style="left:349px;top:114px;width:600px"><span style="color:#008c00">#include<span class="sp"> </span>&lt;</span><span style="color:#0c0cff">QApplication</span><span style="color:#008c00">&gt;</span>
<span style="color:#008c00">#include<span class="sp"> </span>&lt;</span><span style="color:#0c0cff">QScrollArea</span><span style="color:#008c00">&gt;</span>
<span style="color:#008c00">#include<span class="sp"> </span>&lt;</span><span style="color:#0c0cff">QMessageBox</span><span style="color:#008c00">&gt;</span>
<span style="color:#008c00">#include<span class="sp"> </span>&lt;</span><span style="color:#0c0cff">QPixmap</span><span style="color:#008c00">&gt;</span>
<span style="color:#008c00">#include<span class="sp"> </span>&lt;</span><span style="color:#0c0cff">QFileDialog</span><span style="color:#008c00">&gt;</span>
<span style="color:#008c00">#include<span class="sp"> </span>&lt;</span><span style="color:#0c0cff">QTextStream</span><span style="color:#008c00">&gt;</span>
<span style="color:#008c00">#include<span class="sp"> </span>&lt;</span><span style="color:#0c0cff">QTextCodec</span><span style="color:#008c00">&gt;</span>
<span style="color:#008c00">#include<span class="sp"> </span>&lt;</span><span style="color:#0c0cff">QFontDialog</span><span style="color:#008c00">&gt;</span>
<span style="color:#008c00">#include<span class="sp"> </span>&lt;</span><span style="color:#0c0cff">QSettings</span><span style="color:#008c00">&gt;</span>
<span style="color:#008c00">#include<span class="sp"> </span>&lt;</span><span style="color:#0c0cff">QTime</span><span style="color:#008c00">&gt;</span>
<span style="color:#008c00">#include<span class="sp"> </span>&lt;</span><span style="color:#0c0cff">QtDebug</span><span style="color:#008c00">&gt;</span>
<span style="color:#008c00">#include<span class="sp"> </span>&lt;</span><span style="color:#0c0cff">QThread</span><span style="color:#008c00">&gt;</span>
<span style="color:#008c00">#include<span class="sp"> </span>&lt;</span><span style="color:#0c0cff">QTimer</span><span style="color:#008c00">&gt;</span>
<span style="color:#008c00">#include<span class="sp"> </span>&lt;</span><span style="color:#0c0cff">QDir</span><span style="color:#008c00">&gt;</span>
<span style="color:#fa0a0a">//#include<span class="sp r"> </span>&lt;QFileInfo<span class="sp r"> </span>&gt;</span>

<span style="color:#008c00">#include &lt;QObject&gt;</span>
<span style="color:#008c00">#include &lt;QMutex&gt;</span>

<span style="color:#008c00">#define HOCR_ALIGN 0</span>
<span style="color:#008c00">#define HOCR_X 1</span>

<span style="color:#111">HOCRThread::HOCRThread</span>
<span style="color:#111">{</span>
</div>
<!-- v scrollbar -->
<div class="a" style="left:974px;top:114px;width:15px;height:456px;background:#d2d2d8;border-left:1px solid #8e8e92;border-right:1px solid #8e8e92"></div>
<div class="a" style="left:974px;top:114px;width:15px;height:15px;background:linear-gradient(90deg,#fff,#e6e6ea);border:1px solid #8e8e92;border-radius:3px 3px 0 0"></div>
<div class="a" style="left:978px;top:119px;width:0;height:0;border-left:4px solid transparent;border-right:4px solid transparent;border-bottom:5px solid #000"></div>
<div class="a" style="left:974px;top:128px;width:15px;height:28px;background:linear-gradient(90deg,#fafafb,#e2e2e6);border:1px solid #8e8e92"></div>
<div class="a" style="left:977px;top:138px;width:9px;height:7px;background:repeating-linear-gradient(#a8a8ac 0 1px,transparent 1px 3px)"></div>
<!-- h scrollbar -->
<div class="a" style="left:291px;top:570px;width:683px;height:16px;background:#d2d2d8;border-top:1px solid #8e8e92;border-bottom:1px solid #8e8e92"></div><div class="a" style="left:974px;top:570px;width:16px;height:17px;background:#e8e8ec;border-top:1px solid #a0a0a4;border-right:1px solid #a0a0a4;border-bottom:1px solid #c0c0c4;border-bottom-right-radius:2px"></div>
<div class="a" style="left:291px;top:570px;width:15px;height:16px;background:linear-gradient(#fff,#e6e6ea);border:1px solid #8e8e92;border-radius:3px 0 0 3px"></div>
<div class="a" style="left:295px;top:574px;width:0;height:0;border-top:4px solid transparent;border-bottom:4px solid transparent;border-right:5px solid #000"></div>
<div class="a" style="left:305px;top:570px;width:27px;height:16px;background:linear-gradient(#fafafb,#e2e2e6);border:1px solid #8e8e92"></div>
<div class="a" style="left:314px;top:574px;width:6px;height:8px;background:repeating-linear-gradient(90deg,#a8a8ac 0 1px,transparent 1px 2px)"></div>
<div class="a" style="left:959px;top:570px;width:15px;height:16px;background:linear-gradient(#fff,#e6e6ea);border:1px solid #8e8e92;border-radius:0 0 3px 0"></div>
<div class="a" style="left:964px;top:574px;width:0;height:0;border-top:4px solid transparent;border-bottom:4px solid transparent;border-left:5px solid #000"></div>


<!-- REGISTERS -->

<div class="a" style="left:999px;top:88px;width:1px;height:23px;background:#c8c8cc"></div>
<!-- editor/registers splitter grip -->
<div class="a" style="left:994px;top:317px;width:4px;height:39px;background:repeating-linear-gradient(#b0b0b4 0 1px,transparent 1px 2px)"></div>
<div class="a" style="left:1000px;top:88px;width:255px;height:23px;border-top:1px solid #fcfcfd;border-left:1px solid #fcfcfd"></div>
<div class="t" style="left:1004px;top:90px">Registers</div>
<div class="dk" style="left:1225px;top:93px"></div><svg class="a" style="left:1225px;top:93px" width="11" height="11"><rect x="4.5" y="2.5" width="4" height="4" rx="1" fill="none" stroke="#6a6a6e"/><rect x="2.5" y="4.5" width="4" height="4" rx="1" fill="#edeef2" stroke="#6a6a6e"/></svg>
<div class="dk" style="left:1241px;top:93px"></div><svg class="a" style="left:1241px;top:93px" width="11" height="11"><path d="M3 3l5 5M8 3l-5 5" stroke="#606064" stroke-width="1.8"/></svg>
<div class="a" style="left:999px;top:110px;width:256px;height:452px;background:#fff;border:1px solid #a4a4a8;border-right-color:#dcdce0;border-bottom-color:#b8b8bc"></div>
<div class="a" style="left:1001px;top:111px;width:250px;height:26px;background:linear-gradient(#f0f0f4,#eaeaee 70%,#e2e2e6);border-bottom:1px solid #98989c"></div>
<div class="a" style="left:1049px;top:115px;width:1px;height:21px;background:#d0d0d4"></div>
<div class="a" style="left:1149px;top:115px;width:1px;height:21px;background:#d0d0d4"></div>
<div class="a" style="left:1249px;top:115px;width:1px;height:21px;background:#d0d0d4"></div>
<div class="t" style="left:1008px;top:116px">Name</div>
<div class="t" style="left:1083px;top:116px">Value</div>
<div class="t" style="left:1183px;top:116px">Value</div>
<div class="btn" style="left:1175px;top:563px;width:80px;height:26px;border-radius:4px"></div>
<div class="t" style="left:1199px;top:567.5px;font-size:13px">Apply</div>
<div class="a" style="left:1256px;top:88px;width:1px;height:501px;background:#a6a6aa"></div>
<!-- right tabs -->
<div class="a" style="left:1256px;top:87px;width:22px;height:92px;background:linear-gradient(90deg,#d0d0d5,#e6e6ea);border:1px solid #9c9ca0;border-left:none;border-top-right-radius:4px"></div>
<div class="t" style="left:1227.5px;top:125.5px;width:80px;height:15px;font-size:13px;text-align:center;transform:rotate(90deg)">Call Stacks</div>
<div class="a" style="left:1256px;top:178px;width:24px;height:77px;background:linear-gradient(90deg,#e8e8ec,#fdfdfe 40%,#f2f2f5);border-bottom:1px solid #b8b8bc"></div>
<div class="a" style="left:1277px;top:180px;width:3px;height:74px;background:#3b6ac0"></div>
<div class="t" style="left:1228px;top:211.5px;width:80px;height:15px;font-size:13px;text-align:center;transform:rotate(90deg)">Registers</div>


<!-- FLOATING -->

<div class="a" style="left:369px;top:399px;width:758px;height:173px;background:#edeef2;border:2px solid #c4c4c8"></div>
<div class="a" style="left:373px;top:403px;width:750px;height:24px;border-top:1px solid #fcfcfd;border-left:1px solid #fcfcfd;border-bottom:1px solid #a4a4a8"></div>
<div class="t" style="left:378px;top:406px;font-size:13px">Other Variables</div>
<div class="dk" style="left:1093px;top:409px"></div><svg class="a" style="left:1093px;top:409px" width="11" height="11"><rect x="4.5" y="2.5" width="4" height="4" rx="1" fill="none" stroke="#6a6a6e"/><rect x="2.5" y="4.5" width="4" height="4" rx="1" fill="#edeef2" stroke="#6a6a6e"/></svg>
<div class="dk" style="left:1109px;top:409px"></div><svg class="a" style="left:1109px;top:409px" width="11" height="11"><path d="M3 3l5 5M8 3l-5 5" stroke="#606064" stroke-width="1.8"/></svg>
<div class="a" style="left:410px;top:427px;width:713px;height:141px;background:#fff;border-left:1px solid #a4a4a8;border-bottom:1px solid #a4a4a8;border-right:1px solid #b4b4b8"></div>
<div class="a" style="left:411px;top:427px;width:711px;height:26px;background:linear-gradient(#f0f0f4,#eaeaee 70%,#e4e4e8)"></div>
<div class="a" style="left:411px;top:452px;width:400px;height:1px;background:#98989c"></div>
<div class="a" style="left:510px;top:431px;width:1px;height:21px;background:#d0d0d4"></div>
<div class="a" style="left:610px;top:431px;width:1px;height:21px;background:#d0d0d4"></div>
<div class="a" style="left:710px;top:431px;width:1px;height:21px;background:#d0d0d4"></div>
<div class="a" style="left:810px;top:431px;width:1px;height:21px;background:#d0d0d4"></div>
<div class="t" style="left:444px;top:432px;font-size:13px">Name</div>
<div class="t" style="left:548px;top:432px;font-size:13px">Type</div>
<div class="t" style="left:637px;top:432px;font-size:13px">Address</div>
<div class="t" style="left:745px;top:432px;font-size:13px">Value</div>
<div class="btn" style="left:373px;top:465px;width:31px;height:29px;border-radius:4px"></div>
<svg class="a" style="left:379px;top:470px" width="18" height="18" viewBox="0 0 18 18">
<path d="M7.5 3h3v4.5H15v3h-4.5V15h-3v-4.5H3v-3h4.5z" fill="#58c848" stroke="#207818" stroke-width=".8"/>
<path d="M8.5 4v4.5H4" fill="none" stroke="#b8f8a8" stroke-width=".8"/>
</svg>
<div class="btn" style="left:373px;top:501px;width:31px;height:28px;border-radius:4px"></div>
<svg class="a" style="left:379px;top:509px" width="18" height="10" viewBox="0 0 18 10">
<rect x="2.5" y="2.5" width="13" height="4" fill="#e04018" stroke="#a82010" stroke-width=".8"/>
<rect x="3" y="3" width="12" height="1.3" fill="#ff9a70"/>
</svg>


<!-- BUILD DOCK -->

<!-- horizontal splitter grip -->
<div class="a" style="left:620px;top:590px;width:40px;height:4px;background:repeating-linear-gradient(90deg,#b0b0b4 0 1px,transparent 1px 2px)"></div>
<!-- build dock -->
<div class="a" style="left:0;top:595px;width:1280px;height:1px;background:#b4b4b8"></div>
<div class="a" style="left:1px;top:596px;width:1279px;height:22px;border-top:1px solid #fcfcfd;border-left:1px solid #fcfcfd"></div>
<div class="t" style="left:5px;top:598px">Build</div>
<div class="dk" style="left:1250px;top:601px"></div><svg class="a" style="left:1250px;top:601px" width="11" height="11"><rect x="4.5" y="2.5" width="4" height="4" rx="1" fill="none" stroke="#6a6a6e"/><rect x="2.5" y="4.5" width="4" height="4" rx="1" fill="#edeef2" stroke="#6a6a6e"/></svg>
<div class="dk" style="left:1266px;top:601px"></div><svg class="a" style="left:1266px;top:601px" width="11" height="11"><path d="M3 3l5 5M8 3l-5 5" stroke="#606064" stroke-width="1.8"/></svg>
<div class="a" style="left:0;top:618px;width:1280px;height:110px;background:#fff"></div>
<div class="t" style="left:2px;top:620px;font-size:13px;letter-spacing:0.5px">Build (make)...</div>
<div class="t" style="left:2px;top:637px;font-size:13px;letter-spacing:0.66px">make: Nothing to be done for `first'.</div>
<div class="t" style="left:2px;top:654px;font-size:13px"><span style="font-size:12.5px;letter-spacing:0">---------------------</span> <span style="letter-spacing:0.58px">Build finished without error</span><span style="font-size:12.5px;letter-spacing:0">---------------------</span></div>
<!-- bottom tabs -->
<div class="a" style="left:52px;top:728px;width:1228px;height:1px;background:#a4a4a8"></div><div class="a" style="left:1279px;top:596px;width:1px;height:133px;background:#c4c4c8"></div>
<div class="a" style="left:0;top:752px;width:1280px;height:1px;background:#a8a8ac"></div>
<div class="tab" style="left:52px;top:729px;width:75px;height:22px;border-radius:0 0 3px 3px;border:1px solid #9a9a9e;border-top:none;background:linear-gradient(#d2d2d7,#e4e4e8)"></div>
<div class="tab" style="left:126px;top:729px;width:116px;height:22px;border-radius:0 0 3px 3px;border:1px solid #9a9a9e;border-top:none;background:linear-gradient(#d2d2d7,#e4e4e8)"></div>
<div class="tab" style="left:241px;top:729px;width:93px;height:22px;border-radius:0 0 3px 3px;border:1px solid #9a9a9e;border-top:none;background:linear-gradient(#d2d2d7,#e4e4e8)"></div>
<div class="a" style="left:1px;top:728px;width:51px;height:25px;background:linear-gradient(#edeef2,#fafafb);border-left:1px solid #a0a0a4;border-right:1px solid #a0a0a4"></div>
<div class="a" style="left:1px;top:750px;width:51px;height:3px;background:#3b6ac0;border-radius:0 0 3px 3px"></div>
<div class="t" style="left:12px;top:732px;font-size:13px">Build</div>
<div class="t" style="left:65px;top:733px;font-size:13px">Outputs</div>
<div class="t" style="left:138px;top:733px;font-size:13px">Local Variables</div>
<div class="t" style="left:254px;top:733px;font-size:13px">Find in files</div>


<!-- TASKBAR -->

<!-- TASKBAR -->
<div class="a" style="left:0;top:753px;width:1280px;height:47px;background:#edeef2"></div>
<div class="a" style="left:0;top:753px;width:1280px;height:1px;background:#b8b8bc"></div>
<!-- K menu -->
<svg class="a" style="left:6px;top:761px" width="32" height="32" viewBox="0 0 32 32">
<defs><linearGradient id="kg" x1="0" y1="0" x2="1" y2="1"><stop offset="0" stop-color="#7ab4f0"/><stop offset=".5" stop-color="#3c7ad8"/><stop offset="1" stop-color="#2a5cc0"/></linearGradient></defs>
<rect x="1" y="1" width="30" height="30" rx="3" fill="url(#kg)" stroke="#1a3c90" stroke-width="1.5"/>
<circle cx="14" cy="17" r="9" fill="none" stroke="#fff" stroke-width="3" stroke-dasharray="4 2.5"/>
<circle cx="14" cy="17" r="7" fill="none" stroke="#e8f0ff" stroke-width="1.5"/>
<path d="M14 5v18M15 14l9-9M16 13l8 10" stroke="#fff" stroke-width="3.2"/>
</svg>
<!-- computer -->
<svg class="a" style="left:50px;top:763px" width="32" height="29" viewBox="0 0 32 29">
<rect x="20" y="1" width="11" height="27" rx="1" fill="#e0e0e2" stroke="#b0b0b4"/>
<g stroke="#c8c8cc"><path d="M21 6h9M21 9h9M21 12h9"/></g>
<circle cx="25" cy="22" r="1.5" fill="#70b070"/>
<rect x="1" y="5" width="21" height="17" rx="1.5" fill="#d8d8dc" stroke="#a8a8ac"/>
<rect x="3" y="7" width="17" height="12" fill="#a8b8d8"/>
<circle cx="11" cy="13" r="4" fill="none" stroke="#4a70c8" stroke-width="1.6"/>
<ellipse cx="11" cy="25" rx="7" ry="2.5" fill="#e4e4e6" stroke="#b0b0b4"/>
</svg>
<!-- pencil -->
<svg class="a" style="left:94px;top:762px" width="33" height="31" viewBox="0 0 33 31">
<defs><linearGradient id="pb" x1="0" y1="0" x2="1" y2="1"><stop offset="0" stop-color="#a8d8ff"/><stop offset=".5" stop-color="#3a90f0"/><stop offset="1" stop-color="#1a5ad0"/></linearGradient></defs>
<path d="M1 19l15-9 15 9-15 11z" fill="url(#pb)" stroke="#2a6ad8" stroke-width=".8"/>
<path d="M8 15l9-5 8 8-9 5z" fill="#f4f4fa" stroke="#c0c0d0" stroke-width=".6"/>
<path d="M17 21l7-19 4.5 2-7 19z" fill="#f4a828" stroke="#c07818" stroke-width=".6"/>
<path d="M17 21l4.5 2-4.5 2z" fill="#503018"/>
<ellipse cx="29" cy="14" rx="3" ry="2" fill="#d8d8dc"/>
</svg>
<!-- quick icons -->
<svg class="a" style="left:135px;top:757px" width="20" height="20" viewBox="0 0 20 20">
<circle cx="10" cy="9" r="8" fill="#a8d0f4" stroke="#4a90d8"/>
<rect x="1.5" y="9" width="8" height="9" fill="#fff" stroke="#8898c8" stroke-width=".8" transform="rotate(-12 5 13)"/>
<text x="3" y="17" font-size="8" font-family="Liberation Sans" fill="#e04040">3</text>
<rect x="9" y="6" width="10" height="8" fill="#e8e0f8" stroke="#8a80c0" stroke-width=".8"/>
</svg>
<svg class="a" style="left:156px;top:757px" width="21" height="20" viewBox="0 0 21 20">
<circle cx="10.5" cy="10" r="9" fill="#d8d8dc" stroke="#4a80c8" stroke-width="1.2"/>
<path d="M3 14c3-2 5-5 7-9l2 1 3-3 1 3c-1 3-1 7 1 11-5 2-10 1-14-3z" fill="#1a50a8"/>
</svg>
<div class="a" style="left:177px;top:754px;width:36px;height:23px;background:#e8e8e8;border:1.5px solid #3a3a3a;border-top:3px double #3a3a3a"></div>
<svg class="a" style="left:187px;top:758px" width="16" height="16" viewBox="0 0 16 16">
<rect x="1.5" y="1.5" width="13" height="10" rx="1" fill="#111" stroke="#aaa"/>
<text x="5.5" y="10.5" font-size="10" font-family="Liberation Sans" fill="#222" stroke="#222" stroke-width=".3">1</text>
<ellipse cx="8" cy="14" rx="5" ry="1.5" fill="#fff" stroke="#999" stroke-width=".6"/>
</svg>
<svg class="a" style="left:135px;top:778px" width="20" height="20" viewBox="0 0 20 20">
<circle cx="10" cy="10" r="8.5" fill="#2a68c8"/>
<path d="M2 9c0 6 4 10 9 10 5 0 8-4 8-8-1 3-4 5-7 4-3-1-4-3-3-6-2 1-3 0-3-2 0-1 1-2 1-3-3 1-5 3-5 5z" fill="#e8701a"/>
</svg>
<svg class="a" style="left:157px;top:778px" width="20" height="20" viewBox="0 0 20 20">
<path d="M1 5l8-1 9-3v15l-9 3-8-4z" fill="#8ac0f8" stroke="#3a80e0" stroke-width=".8"/>
<path d="M11 14l4-4 4 4v5h-8z" fill="#f08030" stroke="#c05010" stroke-width=".6"/>
</svg>
<div class="a" style="left:177px;top:780px;width:36px;height:20px;background:#fff;border:1.5px solid #3a3a3a"></div>
<svg class="a" style="left:186px;top:782px" width="20" height="16" viewBox="0 0 20 16">
<circle cx="8" cy="8" r="7" fill="#c02020"/>
<text x="4" y="12" font-size="12" font-family="Liberation Sans" font-weight="bold" fill="#111">2</text>
<rect x="0" y="9" width="20" height="2" fill="#2a5ad8"/>
</svg>
<!-- tasks -->
<svg class="a" style="left:216px;top:757px" width="18" height="17" viewBox="0 0 20 20">
<circle cx="10" cy="10" r="8.5" fill="#2a68c8"/>
<path d="M2 9c0 6 4 10 9 10 5 0 8-4 8-8-1 3-4 5-7 4-3-1-4-3-3-6-2 1-3 0-3-2 0-1 1-2 1-3-3 1-5 3-5 5z" fill="#e8701a"/>
</svg>
<div class="t" style="left:238px;top:757px;width:173px;overflow:hidden;-webkit-mask-image:linear-gradient(90deg,#000 80%,transparent)">Problem loading page <span style="color:#909094">- Mozilla Firefox</span></div>
<svg class="a" style="left:217px;top:780px" width="17" height="17" viewBox="0 0 17 17">
<path d="M1 1h4l11 15h-4z" fill="#505054"/><path d="M16 1h-3L1 16h3z" fill="#707074"/>
</svg>
<div class="t" style="left:238px;top:781px;width:173px;overflow:hidden;-webkit-mask-image:linear-gradient(90deg,#000 80%,transparent)">Qt Assistant by Trolltech <span style="color:#909094">- Qt</span></div>
<svg class="a" style="left:416px;top:757px" width="18" height="17" viewBox="0 0 18 17">
<rect x="1" y="1" width="16" height="12" rx="1" fill="#222" stroke="#aaa"/>
<rect x="3" y="3" width="12" height="8" fill="#111"/><path d="M4 5h4" stroke="#ddd"/>
<ellipse cx="9" cy="15" rx="6" ry="1.5" fill="#eee" stroke="#aaa" stroke-width=".6"/>
</svg>
<div class="t" style="left:440px;top:757px;width:171px;overflow:hidden;-webkit-mask-image:linear-gradient(90deg,#000 82%,transparent)">elcuco@pinky: ~/src/svn/qdevelop</div>
<svg class="a" style="left:417px;top:779px" width="18" height="18" viewBox="0 0 18 18">
<circle cx="9" cy="9" r="6" fill="none" stroke="#888" stroke-width="3" stroke-dasharray="2 2"/>
<circle cx="9" cy="9" r="4.5" fill="#40c040" stroke="#208020"/>
<circle cx="9" cy="9" r="2" fill="#fff"/>
</svg>
<div class="t" style="left:438px;top:781px;width:173px;overflow:hidden;-webkit-mask-image:linear-gradient(90deg,#000 82%,transparent)">trunk - file:///home/elcuco/src</div>
<svg class="a" style="left:617px;top:757px" width="17" height="17" viewBox="0 0 17 17">
<circle cx="8.5" cy="8.5" r="7.5" fill="#b01818" stroke="#8a8a8a" stroke-width="1"/>
<circle cx="7" cy="7" r="2.2" fill="none" stroke="#eee" stroke-width="1.6"/>
<circle cx="10.5" cy="10.5" r="2" fill="none" stroke="#ddd" stroke-width="1.5"/>
</svg>
<div class="t" style="left:638px;top:757px;width:173px;overflow:hidden;-webkit-mask-image:linear-gradient(90deg,#000 82%,transparent)">/home/elcuco/src/svn/qhocr/trunk</div>
<svg class="a" style="left:617px;top:780px" width="17" height="17" viewBox="0 0 17 17">
<path d="M1 1h4l11 15h-4z" fill="#505054"/><path d="M16 1h-3L1 16h3z" fill="#707074"/>
</svg>
<div class="t" style="left:638px;top:781px;font-weight:bold;color:#111;letter-spacing:0.95px">Other Variables</div>
<!-- tray -->
<div class="a" style="left:1003px;top:770px;width:0;height:0;border-top:6.5px solid transparent;border-bottom:6.5px solid transparent;border-right:8px solid #6a6a6e"></div>
<div class="a" style="left:1018px;top:756px;width:1px;height:42px;background:#a8a8ac"></div>
<svg class="a" style="left:1022px;top:770px" width="22" height="14" viewBox="0 0 22 14">
<g fill="#d02020"><rect y="0" width="22" height="1.6"/><rect y="3.2" width="22" height="1.6"/><rect y="6.4" width="22" height="1.6"/><rect y="9.6" width="22" height="1.6"/><rect y="12.4" width="22" height="1.6"/></g>
<rect width="9" height="7" fill="#2a3a90"/>
<text x="6" y="12" font-size="8" font-weight="bold" font-family="Liberation Sans" fill="#fff" stroke="#111" stroke-width=".5">US</text>
</svg>
<svg class="a" style="left:1047px;top:766px" width="19" height="23" viewBox="0 0 19 23">
<path d="M1 8h5l7-7v21l-7-7H1z" fill="#3a98d8" stroke="#1a5a90"/>
<ellipse cx="13" cy="11.5" rx="5" ry="10" fill="#d0d0d4" stroke="#2a80c0" stroke-width="1.5"/>
<ellipse cx="13" cy="11.5" rx="2.5" ry="5" fill="#f0f0f0"/>
</svg>
<svg class="a" style="left:1069px;top:767px" width="22" height="21" viewBox="0 0 22 21">
<g fill="#5a88c8" stroke="#2a5aa0" stroke-width=".8"><rect x="0.5" y="13" width="4.5" height="7.5"/><rect x="5.5" y="9" width="4.5" height="11.5"/><rect x="10.5" y="5" width="4.5" height="15.5"/><rect x="15.5" y="0.5" width="5" height="20"/></g>
</svg>
<svg class="a" style="left:1093px;top:766px" width="23" height="22" viewBox="0 0 23 22">
<rect x="0" y="8" width="2" height="5" fill="#20a020"/>
<rect x="2" y="5" width="20" height="11" rx="1.5" fill="#30c030" stroke="#104010"/>
<path d="M13 1l-6 10h4l-2 9 7-11h-4z" fill="#f8c818" stroke="#c08010" stroke-width=".5"/>
</svg>
<svg class="a" style="left:1118px;top:766px" width="23" height="22" viewBox="0 0 23 22">
<path d="M1 12l8-10 4 3-7 15z" fill="#e8e8ec" stroke="#a0a0a8"/>
<g fill="#f8a820" stroke="#c07010" stroke-width=".6"><rect x="12" y="2" width="9" height="6" rx="2"/><rect x="12" y="8" width="9" height="6" rx="2"/><rect x="12" y="14" width="9" height="6" rx="2"/></g>
</svg>
<!-- keyboard grid -->
<div class="a" style="left:1141px;top:754px;width:45px;height:15px;border-left:1px solid #fff;border-top:1px solid #fff"></div>
<div class="a" style="left:1141px;top:754px;width:15px;height:15px;border-right:1px solid #606064;border-bottom:1px solid #606064;background:#f0f0f2"></div>
<div class="a" style="left:1156px;top:754px;width:15px;height:15px;border-right:1px solid #606064;border-bottom:1px solid #606064;background:#f0f0f2"></div>
<div class="a" style="left:1171px;top:754px;width:15px;height:15px;border-right:1px solid #606064;border-bottom:1px solid #606064;background:#f0f0f2"></div>
<div class="a" style="left:1141px;top:769px;width:15px;height:15px;border-right:1px solid #606064;border-bottom:1px solid #606064;background:#f0f0f2"></div>
<div class="a" style="left:1156px;top:769px;width:15px;height:15px;border-right:1px solid #606064;border-bottom:1px solid #606064;background:#f0f0f2"></div>
<div class="a" style="left:1141px;top:784px;width:15px;height:15px;border-right:1px solid #606064;border-bottom:1px solid #606064;background:#f0f0f2"></div>
<div class="a" style="left:1156px;top:784px;width:15px;height:15px;border-right:1px solid #606064;border-bottom:1px solid #606064;background:#f0f0f2"></div>
<svg class="a" style="left:1141px;top:754px" width="45" height="45" viewBox="0 0 45 45">
<g fill="none" stroke="#7a7a7e" stroke-width=".9">
<path d="M7.5 3l4 4h-2v3.5h-4V7h-2z"/><path d="M19 9l3.5-4 3.5 4"/><path d="M35 10h7"/>
<rect x="3.5" y="18" width="8" height="8"/><path d="M7.5 18v8M3.5 22h8"/>
<path d="M22.5 42l3.5-4h-2v-3.5h-3V38h-2z"/>
</g>
<rect x="3" y="34" width="10" height="2" fill="#111"/><rect x="3" y="34" width="1.5" height="1" fill="#fff"/><text x="6" y="43" font-size="6" font-family="Liberation Sans" fill="#333">0</text>
<text x="18" y="26" font-size="8" font-weight="bold" font-family="Liberation Sans" fill="#111">ae</text>
</svg>
<svg class="a" style="left:1173px;top:786px" width="12" height="12" viewBox="0 0 12 12">
<path d="M1.5 2.5c0-1 1-2 2-2h5c1 0 2 1 2 2v5c0 3-2 4-4.5 4S1.5 10.5 1.5 7.5z" fill="#fff" stroke="#333"/>
<path d="M1.5 5h9M4.5 0.5v4.5M7.5 0.5v4.5" stroke="#333"/>
</svg>
<div class="t" style="left:1196px;top:759px;font-size:18px;line-height:20px;font-weight:bold;color:#111;letter-spacing:0.4px">19:27</div>
<div class="t" style="left:1190px;top:784px;font-size:13.5px;line-height:15px;letter-spacing:0.5px">29/1/2008</div>
<div class="a" style="left:1258px;top:754px;width:22px;height:22px;border:1px solid #b0b0b4;border-radius:3px;background:#fff"></div>
<svg class="a" style="left:1260px;top:756px" width="19" height="19" viewBox="0 0 19 19">
<defs><linearGradient id="lb" x1="0" y1="0" x2="0" y2="1"><stop offset="0" stop-color="#8ab8f0"/><stop offset="1" stop-color="#3a6ec8"/></linearGradient></defs>
<rect x="0.5" y="0.5" width="18" height="18" rx="2" fill="url(#lb)" stroke="#2a58b0"/>
<path d="M5.5 8V5.5a4 4 0 0 1 8 0" fill="none" stroke="#fff" stroke-width="1.6"/>
<rect x="4" y="9" width="11" height="6" rx="1" fill="none" stroke="#fff" stroke-width="1.6"/>
</svg>
<div class="a" style="left:1258px;top:778px;width:22px;height:22px;border:1px solid #b0b0b4;border-radius:3px;background:#fff"></div>
<svg class="a" style="left:1260px;top:780px" width="19" height="19" viewBox="0 0 19 19">
<rect x="0.5" y="0.5" width="18" height="18" rx="2" fill="#d82828" stroke="#901010"/>
<circle cx="9.5" cy="9.5" r="5.5" fill="none" stroke="#fff" stroke-width="1.8"/>
<path d="M9.5 3v6" stroke="#d82828" stroke-width="3.5"/><path d="M9.5 3.5v6" stroke="#fff" stroke-width="1.8"/>
</svg>


</body></html>
